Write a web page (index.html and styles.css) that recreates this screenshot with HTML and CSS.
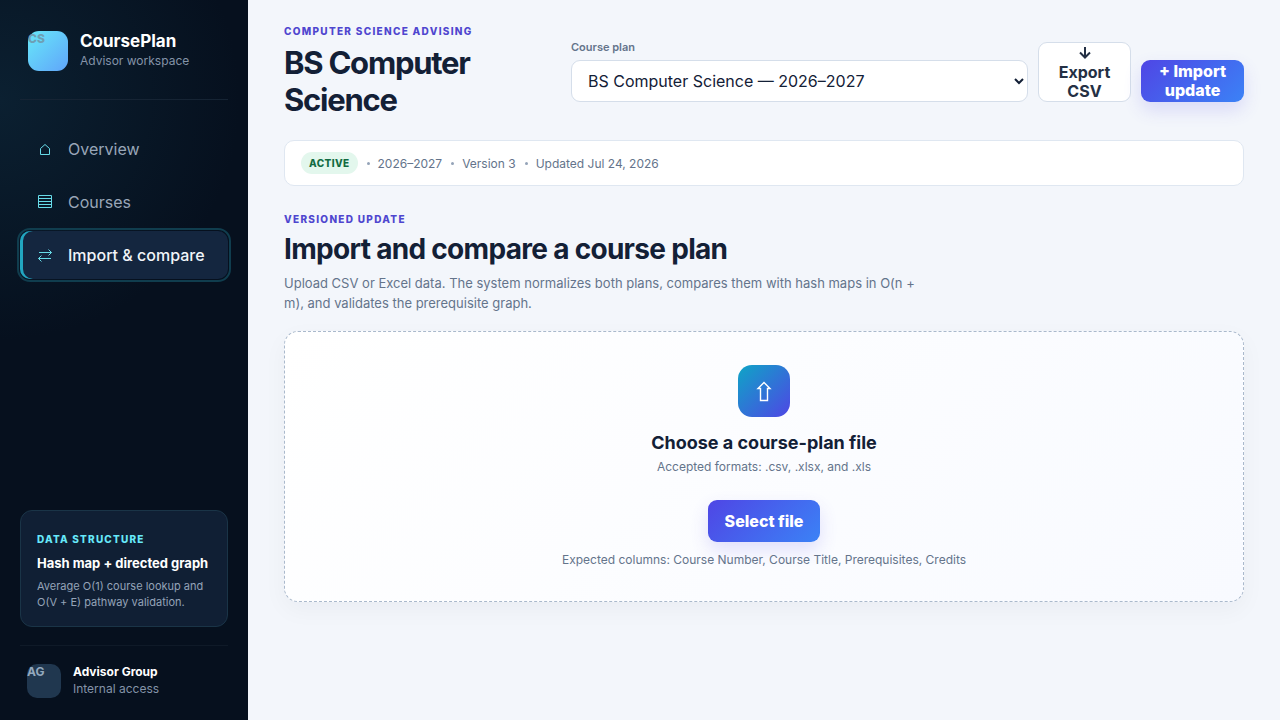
FILE: index.html
```html
<!DOCTYPE html>
<html lang="en">
<head>
    <meta charset="UTF-8">
    <meta name="viewport" content="width=device-width, initial-scale=1.0">
    <title>CoursePlan - Import &amp; compare</title>
    <link rel="stylesheet" href="styles.css">
</head>
<body>
    <div class="app">
        <aside class="sidebar">
            <div class="brand">
                <span class="brand-mark">CS</span>
                <div>
                    <strong class="brand-name">CoursePlan</strong>
                    <span class="brand-sub">Advisor workspace</span>
                </div>
            </div>

            <nav class="nav" aria-label="Main">
                <a href="#overview" class="nav-link">
                    <svg class="nav-icon" viewBox="0 0 18 18" aria-hidden="true"><path d="M4.5 14.5V8.5L9 4.5L13.5 8.5V14.5Z"/></svg>
                    Overview
                </a>
                <a href="#courses" class="nav-link">
                    <svg class="nav-icon" viewBox="0 0 18 18" aria-hidden="true"><path d="M2.5 2.5H15.5V14.5H2.5ZM2.5 5.5H15.5M2.5 8.5H15.5M2.5 11.5H15.5"/></svg>
                    Courses
                </a>
                <a href="#import" class="nav-link active" aria-current="page">
                    <svg class="nav-icon" viewBox="0 0 18 18" aria-hidden="true"><path d="M3 6.5H15.5M12.5 3.5L15.5 6.5L12.5 9.5M15 12.5H2.5M5.5 9.5L2.5 12.5L5.5 15.5"/></svg>
                    Import &amp; compare
                </a>
            </nav>

            <div class="note">
                <span class="note-label">Data structure</span>
                <strong class="note-title">Hash map + directed graph</strong>
                <p class="note-text">Average O(1) course lookup and O(V + E) pathway validation.</p>
            </div>

            <div class="user">
                <span class="avatar">AG</span>
                <div>
                    <strong class="user-name">Advisor Group</strong>
                    <span class="user-role">Internal access</span>
                </div>
            </div>
        </aside>

        <main class="main">
            <header class="topbar">
                <div class="topbar-title">
                    <p class="eyebrow">Computer Science Advising</p>
                    <h1>BS Computer Science</h1>
                </div>
                <div class="actions">
                    <div class="plan-field">
                        <label for="plan">Course plan</label>
                        <select id="plan">
                            <option>BS Computer Science — 2026–2027</option>
                        </select>
                    </div>
                    <button type="button" class="btn btn-export">
                        <svg class="down-icon" viewBox="0 0 16 16" aria-hidden="true"><path d="M8 2V12M3 7.5L8 12.5L13 7.5"/></svg>
                        Export CSV
                    </button>
                    <button type="button" class="btn btn-primary btn-import">+ Import update</button>
                </div>
            </header>

            <section class="meta" aria-label="Plan details">
                <span class="badge">Active</span>
                <span class="meta-item">2026–2027</span>
                <span class="meta-item">Version 3</span>
                <span class="meta-item">Updated Jul 24, 2026</span>
            </section>

            <section class="intro">
                <p class="eyebrow">Versioned update</p>
                <h2>Import and compare a course plan</h2>
                <p class="intro-text">Upload CSV or Excel data. The system normalizes both plans, compares them with hash maps in O(n + m), and validates the prerequisite graph.</p>
            </section>

            <section class="dropzone">
                <div class="upload-icon">
                    <svg viewBox="0 0 24 24" aria-hidden="true"><path d="M12 3.5L18 9.5H15.5V21.5H8.5V9.5H6Z"/></svg>
                </div>
                <h3>Choose a course-plan file</h3>
                <p class="hint">Accepted formats: .csv, .xlsx, and .xls</p>
                <button type="button" class="btn btn-primary btn-select">Select file</button>
                <p class="hint">Expected columns: Course Number, Course Title, Prerequisites, Credits</p>
            </section>
        </main>
    </div>
</body>
</html>
```
FILE: styles.css
```css
* {
    box-sizing: border-box;
}

body {
    margin: 0;
    font-family: Inter, "Liberation Sans", sans-serif;
    font-size: 16px;
    color: #132036;
    background-color: #f3f6fb;
}

h1, h2, h3, p {
    margin: 0;
}

.app {
    display: grid;
    grid-template-columns: 248px minmax(0, 1fr);
    min-height: 100vh;
}

/* Sidebar */
.sidebar {
    display: flex;
    flex-direction: column;
    padding: 20px;
    color: #fff;
    background: radial-gradient(circle at 0 100px, #0b2031 0, rgba(11, 32, 49, 0) 240px), #06101e;
}

.brand {
    display: flex;
    align-items: center;
    gap: 12px;
    padding: 11px 8px 28px;
    border-bottom: 1px solid #162434;
}

.brand-mark {
    width: 40px;
    height: 40px;
    border-radius: 11px;
    font-size: 12px;
    line-height: 16px;
    font-weight: 800;
    color: #6e9fb4;
    background: linear-gradient(135deg, #67e8f9, #60a5fa);
}

.brand-name,
.brand-sub,
.user-name,
.user-role,
.note-label,
.note-title {
    display: block;
}

.brand-name {
    font-size: 17px;
    line-height: 20px;
}

.brand-sub {
    font-size: 12px;
    line-height: 20px;
    color: #8493a8;
}

.nav {
    display: grid;
    gap: 5px;
    margin-top: 25px;
}

.nav-link {
    display: flex;
    align-items: center;
    gap: 14px;
    height: 48px;
    padding: 0 16px;
    border-radius: 10px;
    font-size: 16px;
    color: #99a6b8;
    text-decoration: none;
}

.nav-link.active {
    font-weight: 500;
    color: #f1f5f9;
    background-color: #14263f;
    box-shadow: inset 3px 0 0 #22a6c0;
    outline: 2px solid #103d4e;
    outline-offset: 1px;
}

.nav-icon {
    width: 18px;
    height: 18px;
    fill: none;
    stroke: #67dbe8;
}

.note {
    margin-top: auto;
    padding: 20px 16px 16px;
    border: 1px solid #1a3447;
    border-radius: 12px;
    background-color: #101f34;
}

.note-label {
    font-size: 10px;
    line-height: 16px;
    font-weight: 800;
    letter-spacing: 0.12em;
    text-transform: uppercase;
    color: #67e8f9;
}

.note-title {
    margin-top: 7px;
    font-size: 13px;
    line-height: 18px;
    white-space: nowrap;
}

.note-text {
    margin-top: 6px;
    font-size: 11px;
    line-height: 16px;
    color: #94a3b8;
}

.user {
    display: flex;
    align-items: center;
    gap: 12px;
    margin-top: 18px;
    padding: 18px 7px 2px;
    border-top: 1px solid #0f1a28;
}

.avatar {
    width: 34px;
    height: 34px;
    border-radius: 10px;
    font-size: 12px;
    line-height: 16px;
    font-weight: 700;
    color: #94a9be;
    background-color: #20374f;
}

.user-name {
    font-size: 12px;
    line-height: 16px;
}

.user-role {
    font-size: 12px;
    line-height: 18px;
    color: #8493a8;
}

/* Main column */
.main {
    padding: 22px 36px;
}

.topbar {
    display: flex;
    align-items: center;
    gap: 24px;
}

.topbar-title {
    flex: 1 1 0;
}

.eyebrow {
    font-size: 10px;
    line-height: 18px;
    font-weight: 800;
    letter-spacing: 0.13em;
    text-transform: uppercase;
    color: #4f46cf;
}

h1 {
    margin-top: 4px;
    font-size: 31px;
    line-height: 37px;
    letter-spacing: -0.04em;
}

.actions {
    display: flex;
    align-items: flex-end;
    gap: 10px;
    flex: 0 1 673px;
}

.plan-field {
    flex: 1;
    min-width: 0;
}

.plan-field label {
    display: block;
    margin-bottom: 5px;
    font-size: 11px;
    line-height: 16px;
    font-weight: 600;
    color: #64748b;
}

.plan-field select {
    display: block;
    width: 100%;
    height: 42px;
    padding: 0 12px;
    border: 1px solid #d5deea;
    border-radius: 9px;
    font: inherit;
    color: #132036;
    background-color: #fff;
}

.btn {
    min-height: 42px;
    padding: 0 16px;
    border: 1px solid transparent;
    border-radius: 9px;
    font: inherit;
    line-height: 19px;
    font-weight: 800;
    cursor: pointer;
}

.btn-export {
    width: 93px;
    font-weight: 700;
    color: #243044;
    border-color: #d5deea;
    background-color: #fff;
}

.down-icon {
    display: block;
    width: 16px;
    height: 20px;
    margin: 0 auto;
    fill: none;
    stroke: currentColor;
    stroke-width: 2;
}

.btn-primary {
    color: #fff;
    background: linear-gradient(135deg, #4f46e5, #3b82f6) border-box;
    box-shadow: 0 8px 18px rgba(79, 70, 229, 0.16);
}

.btn-import {
    width: 103px;
}

.meta {
    display: flex;
    align-items: center;
    gap: 9px;
    margin-top: 22px;
    padding: 11px 16px;
    border: 1px solid #dfe7f1;
    border-radius: 10px;
    font-size: 12px;
    color: #64748b;
    background-color: #fff;
}

.badge {
    padding: 3px 8px;
    border-radius: 12px;
    font-size: 10px;
    line-height: 16px;
    font-weight: 800;
    letter-spacing: 0.04em;
    text-transform: uppercase;
    color: #126b42;
    background-color: #e3f7ed;
}

.meta-item {
    display: flex;
    align-items: center;
    gap: 8px;
}

.meta-item::before {
    content: "";
    width: 3px;
    height: 3px;
    border-radius: 50%;
    background-color: #94a3b8;
}

.intro {
    margin-top: 24px;
}

h2 {
    margin-top: 4px;
    font-size: 28px;
    line-height: 35px;
    letter-spacing: -0.025em;
}

.intro-text {
    max-width: 650px;
    margin-top: 6px;
    font-size: 13px;
    line-height: 20px;
    color: #64748b;
}

.dropzone {
    display: flex;
    flex-direction: column;
    align-items: center;
    margin-top: 18px;
    padding: 33px 24px 31px;
    border: 1px dashed #aab9cc;
    border-radius: 14px;
    text-align: center;
    background: linear-gradient(135deg, #fff, #f8faff);
    box-shadow: 0 8px 24px rgba(20, 32, 58, 0.04);
}

.upload-icon {
    display: grid;
    place-items: center;
    width: 52px;
    height: 52px;
    border-radius: 14px;
    background: linear-gradient(135deg, #0ea5c6, #4f46e5);
}

.upload-icon svg {
    width: 24px;
    height: 24px;
    fill: none;
    stroke: #fff;
    stroke-width: 1.4;
}

h3 {
    margin-top: 14px;
    font-size: 18px;
    line-height: 24px;
}

.hint {
    font-size: 12px;
    line-height: 20px;
    color: #64748b;
}

h3 + .hint {
    margin-top: 2px;
}

.btn-select {
    margin: 23px 0 8px;
}
```
